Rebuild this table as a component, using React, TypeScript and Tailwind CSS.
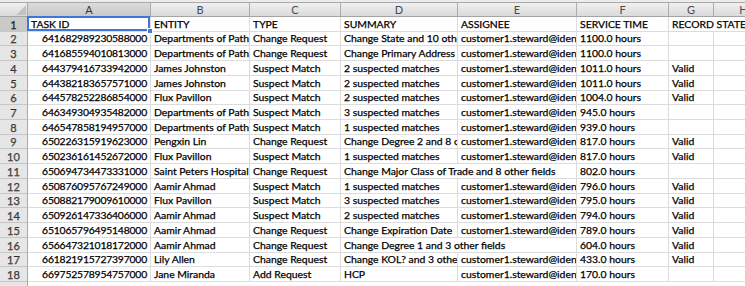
import React from 'react'

type Row = {
  id: string
  entity: string
  type: string
  summary: string
  assignee: string
  time: string
  state: string
  wide?: boolean
}

const ASSIGNEE = 'customer1.steward@identity.com'

const rows: Row[] = [
  { id: '641682989230588000', entity: 'Departments of Pathology', type: 'Change Request', summary: 'Change State and 10 other fields', assignee: ASSIGNEE, time: '1100.0 hours', state: '' },
  { id: '641685594010813000', entity: 'Departments of Pathology', type: 'Change Request', summary: 'Change Primary Address', assignee: ASSIGNEE, time: '1100.0 hours', state: '' },
  { id: '644379416733942000', entity: 'James Johnston', type: 'Suspect Match', summary: '2 suspected matches', assignee: ASSIGNEE, time: '1011.0 hours', state: 'Valid' },
  { id: '644382183657571000', entity: 'James Johnston', type: 'Suspect Match', summary: '2 suspected matches', assignee: ASSIGNEE, time: '1011.0 hours', state: 'Valid' },
  { id: '644578252286854000', entity: 'Flux Pavillon', type: 'Suspect Match', summary: '2 suspected matches', assignee: ASSIGNEE, time: '1004.0 hours', state: 'Valid' },
  { id: '646349304935482000', entity: 'Departments of Pathology', type: 'Suspect Match', summary: '3 suspected matches', assignee: ASSIGNEE, time: '945.0 hours', state: '' },
  { id: '646547858194957000', entity: 'Departments of Pathology', type: 'Suspect Match', summary: '1 suspected matches', assignee: ASSIGNEE, time: '939.0 hours', state: '' },
  { id: '650226315919623000', entity: 'Pengxin Lin', type: 'Change Request', summary: 'Change Degree 2 and 8 other fields', assignee: ASSIGNEE, time: '817.0 hours', state: 'Valid' },
  { id: '650236161452672000', entity: 'Flux Pavillon', type: 'Suspect Match', summary: '1 suspected matches', assignee: ASSIGNEE, time: '817.0 hours', state: 'Valid' },
  { id: '650694734473331000', entity: 'Saint Peters Hospital', type: 'Change Request', summary: 'Change Major Class of Trade and 8 other fields', assignee: '', time: '802.0 hours', state: '', wide: true },
  { id: '650876095767249000', entity: 'Aamir Ahmad', type: 'Suspect Match', summary: '1 suspected matches', assignee: ASSIGNEE, time: '796.0 hours', state: 'Valid' },
  { id: '650882179009610000', entity: 'Flux Pavillon', type: 'Suspect Match', summary: '3 suspected matches', assignee: ASSIGNEE, time: '795.0 hours', state: 'Valid' },
  { id: '650926147336406000', entity: 'Aamir Ahmad', type: 'Suspect Match', summary: '2 suspected matches', assignee: ASSIGNEE, time: '794.0 hours', state: 'Valid' },
  { id: '651065796495148000', entity: 'Aamir Ahmad', type: 'Change Request', summary: 'Change Expiration Date', assignee: ASSIGNEE, time: '789.0 hours', state: 'Valid' },
  { id: '656647321018172000', entity: 'Aamir Ahmad', type: 'Change Request', summary: 'Change Degree 1 and 3 other fields', assignee: '', time: '604.0 hours', state: 'Valid', wide: true },
  { id: '661821915727397000', entity: 'Lily Allen', type: 'Change Request', summary: 'Change KOL? and 3 other fields', assignee: ASSIGNEE, time: '433.0 hours', state: 'Valid' },
  { id: '669752578954757000', entity: 'Jane Miranda', type: 'Add Request', summary: 'HCP', assignee: ASSIGNEE, time: '170.0 hours', state: '' },
]

// row bottoms land on 17 + n * 14.72, rounded
function rowHeight(n: number) {
  const b = (i: number) => Math.round(17 + i * 14.72)
  return b(n) - b(n - 1) >= 15 ? 'h-[15px]' : 'h-[14px]'
}

const cell = 'flex items-center overflow-hidden whitespace-nowrap border-r border-b border-[#dcdcdc] px-[3px] shrink-0'

function RowNum({ n, active }: { n: number; active?: boolean }) {
  return (
    <div
      className={`flex w-[28px] shrink-0 items-center justify-center border-r border-b border-r-[#a8a8a8] border-b-[#c6c6c6] text-[11px] ${
        active ? 'bg-[#c9c9c9] text-[#333]' : 'bg-[#e6e6e6] text-[#5c5c5c]'
      }`}
    >
      {n}
    </div>
  )
}

function ColHead({ label, w, active }: { label: string; w: string; active?: boolean }) {
  return (
    <div
      className={`flex shrink-0 items-center justify-center border-r border-[#acacac] text-[11px] ${w} ${
        active ? 'bg-gradient-to-b from-[#dcdcdc] to-[#c8c8c8] text-[#333]' : 'bg-gradient-to-b from-[#f0f0f0] to-[#dadada] text-[#4a4a4a]'
      }`}
    >
      {label}
    </div>
  )
}

export default function App() {
  return (
    <div
      className="h-[286px] w-[745px] overflow-hidden bg-white text-[10.4px] leading-none text-black [-webkit-text-stroke:0.25px_#000]"
      style={{ fontFamily: 'Lato, "Open Sans", sans-serif' }}
    >
      <div className="h-[3px] border-b border-[#a9a9a9] bg-[#ececec]" />

      {/* column letters */}
      <div className="flex h-[14px] border-b border-[#a4a4a4] [-webkit-text-stroke:0px]">
        <div className="relative w-[28px] shrink-0 border-r border-[#a8a8a8] bg-gradient-to-b from-[#f0f0f0] to-[#dadada]">
          <svg className="absolute right-[1px] bottom-[1px]" width="10" height="10" viewBox="0 0 10 10">
            <polygon points="10,0 10,10 0,10" fill="#c2c2c2" />
          </svg>
        </div>
        <ColHead label="A" w="w-[123px]" active />
        <ColHead label="B" w="w-[99px]" />
        <ColHead label="C" w="w-[91px]" />
        <ColHead label="D" w="w-[117px]" />
        <ColHead label="E" w="w-[119px]" />
        <ColHead label="F" w="w-[92px]" />
        <ColHead label="G" w="w-[45px]" />
        <ColHead label="H" w="w-[60px]" />
      </div>

      {/* header row */}
      <div className={`flex ${rowHeight(1)}`}>
        <RowNum n={1} active />
        <div className={`${cell} relative w-[123px] overflow-visible`}>
          TASK ID
          <div className="absolute -top-[1px] -left-[1px] h-[calc(100%+1px)] w-[calc(100%+1px)] border-2 border-[#3f76d8]" />
          <div className="absolute -right-[3px] -bottom-[3px] h-[6px] w-[6px] border border-white bg-[#3f76d8]" />
        </div>
        <div className={`${cell} w-[99px]`}>ENTITY</div>
        <div className={`${cell} w-[91px]`}>TYPE</div>
        <div className={`${cell} w-[117px]`}>SUMMARY</div>
        <div className={`${cell} w-[119px]`}>ASSIGNEE</div>
        <div className={`${cell} w-[92px]`}>SERVICE TIME</div>
        <div className={`${cell} w-[105px]`}>RECORD STATE</div>
      </div>

      {rows.map((r, i) => (
        <div key={r.id} className={`flex ${rowHeight(i + 2)}`}>
          <RowNum n={i + 2} />
          <div className={`${cell} w-[123px] justify-end tracking-[-0.2px]`}>{r.id}</div>
          <div className={`${cell} w-[99px]`}>{r.entity}</div>
          <div className={`${cell} w-[91px]`}>{r.type}</div>
          {r.wide ? (
            <div className={`${cell} w-[236px]`}>{r.summary}</div>
          ) : (
            <>
              <div className={`${cell} w-[117px]`}>{r.summary}</div>
              <div className={`${cell} w-[119px]`}>{r.assignee}</div>
            </>
          )}
          <div className={`${cell} w-[92px]`}>{r.time}</div>
          <div className={`${cell} w-[45px]`}>{r.state}</div>
          <div className={`${cell} w-[60px]`} />
        </div>
      ))}

      <div className="flex h-[15px]">
        <RowNum n={19} />
      </div>
    </div>
  )
}
